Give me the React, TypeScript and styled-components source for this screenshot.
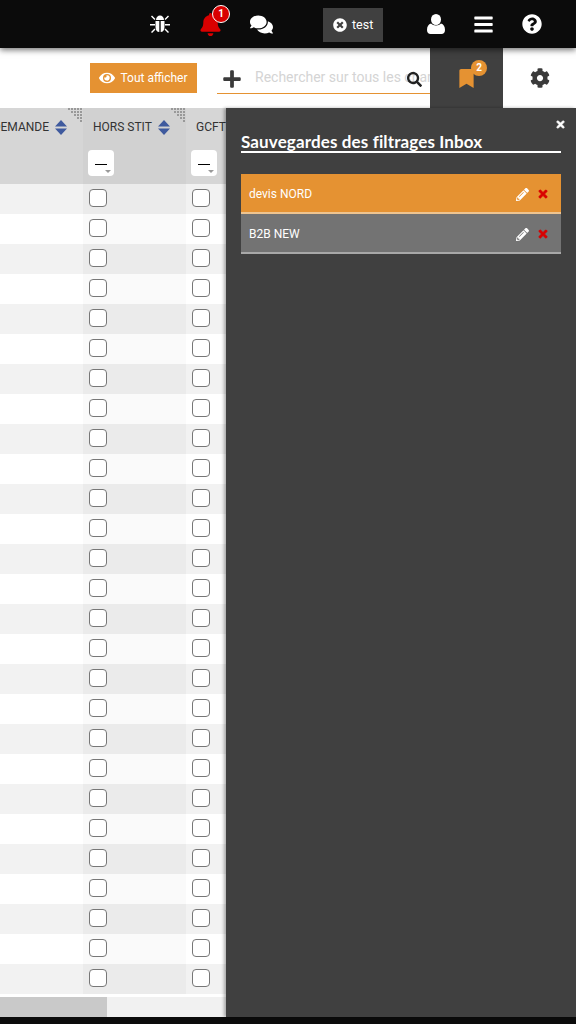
import React from 'react'
import styled, { createGlobalStyle } from 'styled-components'
import {
  FaBars, FaBell, FaBookmark, FaCog, FaComments, FaEye, FaPencilAlt, FaPlus,
  FaQuestionCircle, FaSearch, FaTimes, FaTimesCircle,
} from 'react-icons/fa'

const GlobalStyle = createGlobalStyle`
  html, body { margin: 0; padding: 0; background: #fff; overflow: hidden; }
  * { box-sizing: border-box; }
  body { font-family: Roboto, "Liberation Sans", sans-serif; }
`

const Page = styled.div`
  display: flex;
  flex-direction: column;
  width: 576px;
  height: 1024px;
  background: #0b0b0b;
`

const TopBar = styled.header`
  position: relative;
  z-index: 3;
  flex: 0 0 48px;
  display: flex;
  align-items: center;
  padding-left: 134px;
  background: #0b0b0b;
  box-shadow: 0 2px 6px rgba(0, 0, 0, 0.55);
`

const NavIcon = styled.div<{ $w?: number; $ml?: number }>`
  position: relative;
  flex: 0 0 ${p => p.$w ?? 51}px;
  margin-left: ${p => p.$ml ?? 0}px;
  display: flex;
  justify-content: center;
  align-items: center;
  height: 48px;
  color: #fff;
  font-size: 20px;
`

const NotifBadge = styled.span`
  position: absolute;
  top: 5px;
  left: 27px;
  width: 18px;
  height: 18px;
  border-radius: 50%;
  border: 1px solid #fff;
  background: #d90000;
  color: #fff;
  font-size: 10px;
  font-weight: 700;
  line-height: 16px;
  text-align: center;
`

const UserChip = styled.div`
  flex: 0 0 60px;
  margin-left: 36px;
  height: 34px;
  margin-top: 1px;
  display: flex;
  align-items: center;
  gap: 5px;
  padding-left: 10px;
  background: #404040;
  color: #fff;
  font-size: 12.5px;
`

const ToolBar = styled.div`
  flex: 0 0 60px;
  display: flex;
  align-items: stretch;
  background: #fff;
`

const ShowAll = styled.button`
  align-self: flex-start;
  width: 107px;
  height: 30px;
  margin: 15px 20px 0 90px;
  padding: 0;
  display: flex;
  align-items: center;
  justify-content: center;
  gap: 5px;
  border: 0;
  background: #e59232;
  color: #fff;
  font-family: Roboto, sans-serif;
  font-size: 12px;
  svg { font-size: 16px; }
`

const SearchBox = styled.div`
  position: relative;
  align-self: flex-start;
  flex: 0 0 213px;
  height: 46px;
  display: flex;
  align-items: center;
  gap: 13px;
  padding: 16px 0 0 5px;
  overflow: hidden;
  border-bottom: 1px solid #e59232;
  color: #3a3a3a;
  svg { flex: none; }
`

const Placeholder = styled.span`
  flex: none;
  margin-top: -3px;
  color: #d4d4d4;
  font-size: 14px;
  white-space: nowrap;
`

const SearchGlass = styled.span`
  position: absolute;
  right: 8px;
  top: 24px;
  display: flex;
  color: #222;
  font-size: 15px;
`

const Tab = styled.div<{ $active?: boolean }>`
  position: relative;
  flex: 0 0 73px;
  display: flex;
  align-items: center;
  justify-content: center;
  background: ${p => (p.$active ? '#404040' : '#fff')};
  color: ${p => (p.$active ? '#e59232' : '#3a3a3a')};
  font-size: 20px;
`

const TabBadge = styled.span`
  position: absolute;
  top: 12px;
  left: 41px;
  width: 16px;
  height: 16px;
  border-radius: 50%;
  background: #e59232;
  color: #fff;
  font-size: 10px;
  font-weight: 700;
  line-height: 16px;
  text-align: center;
`

const Main = styled.div`
  flex: 0 0 909px;
  display: flex;
  min-height: 0;
`

const TableArea = styled.div`
  flex: 0 0 226px;
  display: flex;
  flex-direction: column;
  background: #fff;
`

const Row = styled.div<{ $shade?: boolean }>`
  display: grid;
  grid-template-columns: 83px 103px 40px;
  height: 30px;
  background: ${p => (p.$shade ? '#f2f2f2' : '#fff')};
`

const Cell = styled.div<{ $mid?: boolean; $shade?: boolean }>`
  display: flex;
  align-items: center;
  padding: 0 0 2px 6px;
  background: ${p => (p.$mid ? (p.$shade ? '#ebebeb' : '#fafafa') : 'transparent')};
`

const Check = styled.span`
  width: 18px;
  height: 18px;
  border: 1.5px solid #777;
  border-radius: 4px;
  background: #fff;
`

const HeadRow = styled.div`
  display: grid;
  grid-template-columns: 83px 103px 40px;
  height: 76px;
  background: #d6d6d6;
`

const HeadCell = styled.div<{ $mid?: boolean; $right?: boolean }>`
  position: relative;
  overflow: hidden;
  display: flex;
  flex-direction: column;
  align-items: ${p => (p.$right ? 'flex-end' : 'flex-start')};
  padding: 10px ${p => (p.$right ? 16 : 0)}px 0 ${p => (p.$right ? 0 : 10)}px;
  background: ${p => (p.$mid ? '#d1d1d1' : 'transparent')};
`

const HeadTitle = styled.div`
  display: flex;
  align-items: center;
  gap: 6px;
  height: 18px;
  color: #333;
  font-size: 12px;
  white-space: nowrap;
`

const SortArrows = styled.svg`
  display: block;
  flex: none;
`

const FilterSelect = styled.div`
  position: relative;
  width: 26px;
  height: 26px;
  margin: 14px 0 0 -5px;
  border-radius: 4px;
  background: #fff;
  &::before {
    content: '';
    position: absolute;
    left: 7px;
    top: 14px;
    width: 12px;
    height: 1px;
    background: #000;
  }
  &::after {
    content: '';
    position: absolute;
    right: 3px;
    top: 20px;
    border: 3px solid transparent;
    border-top: 3px solid #999;
  }
`

const Corner = styled.svg`
  position: absolute;
  top: 0;
  right: 1px;
`

const ScrollTrack = styled.div`
  height: 20px;
  margin-top: 3px;
  background: #f1f1f1;
`

const ScrollThumb = styled.div`
  width: 107px;
  height: 100%;
  background: #c9c9c9;
`

const SidePanel = styled.aside`
  position: relative;
  flex: 1;
  padding: 24px 15px 0;
  background: #404040;
  box-shadow: -2px 0 3px rgba(0, 0, 0, 0.3);
`

const CloseBtn = styled.span`
  position: absolute;
  top: 11px;
  right: 10px;
  display: flex;
  color: #fff;
  font-size: 11px;
  svg { stroke: #fff; stroke-width: 30px; }
`

const PanelTitle = styled.h2`
  margin: 0 0 21px;
  height: 21px;
  border-bottom: 2px solid #fff;
  color: #fff;
  font-family: Lato, "Open Sans", sans-serif;
  font-size: 17px;
  font-weight: 700;
  letter-spacing: 0.13px;
  line-height: 20px;
  white-space: nowrap;
`

const SaveItem = styled.div<{ $active?: boolean }>`
  display: flex;
  align-items: center;
  height: 40px;
  padding: 2px 12px 0 8px;
  border-bottom: 2px solid ${p => (p.$active ? '#eec490' : '#a8a8a8')};
  background: ${p => (p.$active ? '#e59232' : '#737373')};
  color: #fff;
  font-size: 12px;
`

const SaveLabel = styled.span`
  flex: 1;
`

const SaveActions = styled.span`
  display: flex;
  align-items: center;
  gap: 8px;
  font-size: 13px;
`

const DeleteIcon = styled.span`
  display: flex;
  color: #d90000;
  font-size: 12px;
  svg { stroke: #d90000; stroke-width: 30px; }
`

const Footer = styled.div`
  flex: 1;
  background: #0b0b0b;
`

// dotted resize handle in the top right corner of a column header
const CornerDots = () => (
  <Corner width="14" height="15" viewBox="0 0 14 15">
    {[0, 1, 2, 3, 4].flatMap(r =>
      [0, 1, 2, 3, 4].map(c =>
        c >= r ? <rect key={`${r}-${c}`} x={c * 3} y={r * 3} width="2" height="2" fill="#999" /> : null
      )
    )}
  </Corner>
)

const Sort = () => (
  <SortArrows width="12" height="15" viewBox="0 0 12 15">
    <path d="M6 0 12 6.5H0Z M0 8.5H12L6 15Z" fill="#3f5a9e" />
  </SortArrows>
)

const BugIcon = () => (
  <svg width="20" height="20" viewBox="0 0 20 20" fill="#fff">
    <path d="M6 6C6 3 8 1.5 10 1.5S14 3 14 6Z" />
    <path d="M5.5 7H9.3V18C7 18 5.5 16 5.5 13Z M10.7 7H14.5V13C14.5 16 13 18 10.7 18Z" />
    <path d="M1 2.5 2 1.5 5.5 5 4.5 6Z M19 2.5 18 1.5 14.5 5 15.5 6Z M0 10H5V11.5H0Z M15 10H20V11.5H15Z M1 18 2 19 5.5 15.5 4.5 14.5Z M19 18 18 19 14.5 15.5 15.5 14.5Z" />
  </svg>
)

const UserIcon = () => (
  <svg width="18" height="20" viewBox="0 0 18 20" fill="#fff">
    <ellipse cx="9" cy="5.5" rx="5" ry="5.5" />
    <path d="M4 9.5C6 12 12 12 14 9.5 16.5 10 18 12.5 18 16 18 18.5 16.5 20 14.5 20H3.5C1.5 20 0 18.5 0 16 0 12.5 1.5 10 4 9.5Z" />
  </svg>
)

const rows = Array.from({ length: 27 }, (_, i) => i)

export default function App() {
  return (
    <Page>
      <GlobalStyle />
      <TopBar>
        <NavIcon><BugIcon /></NavIcon>
        <NavIcon>
          <FaBell color="#d90000" size={23} />
          <NotifBadge>1</NotifBadge>
        </NavIcon>
        <NavIcon><FaComments size={23} /></NavIcon>
        <UserChip><FaTimesCircle size={14} /> test</UserChip>
        <NavIcon $ml={27}><UserIcon /></NavIcon>
        <NavIcon $w={44}><FaBars size={21} /></NavIcon>
        <NavIcon $w={54}><FaQuestionCircle /></NavIcon>
      </TopBar>

      <ToolBar>
        <ShowAll><FaEye /> Tout afficher</ShowAll>
        <SearchBox>
          <FaPlus size={20} />
          <Placeholder>Rechercher sur tous les champs</Placeholder>
          <SearchGlass><FaSearch /></SearchGlass>
        </SearchBox>
        <Tab $active>
          <FaBookmark size={19} />
          <TabBadge>2</TabBadge>
        </Tab>
        <Tab><FaCog /></Tab>
      </ToolBar>

      <Main>
        <TableArea>
          <HeadRow>
            <HeadCell $right>
              <HeadTitle>DEMANDE <Sort /></HeadTitle>
              <CornerDots />
            </HeadCell>
            <HeadCell $mid>
              <HeadTitle>HORS STIT <Sort /></HeadTitle>
              <FilterSelect />
              <CornerDots />
            </HeadCell>
            <HeadCell>
              <HeadTitle>GCFT</HeadTitle>
              <FilterSelect />
            </HeadCell>
          </HeadRow>
          {rows.map(i => (
            <Row key={i} $shade={i % 2 === 0}>
              <Cell />
              <Cell $mid $shade={i % 2 === 0}><Check /></Cell>
              <Cell><Check /></Cell>
            </Row>
          ))}
          <ScrollTrack><ScrollThumb /></ScrollTrack>
        </TableArea>

        <SidePanel>
          <CloseBtn><FaTimes /></CloseBtn>
          <PanelTitle>Sauvegardes des filtrages Inbox</PanelTitle>
          <SaveItem $active>
            <SaveLabel>devis NORD</SaveLabel>
            <SaveActions><FaPencilAlt /><DeleteIcon><FaTimes /></DeleteIcon></SaveActions>
          </SaveItem>
          <SaveItem>
            <SaveLabel>B2B NEW</SaveLabel>
            <SaveActions><FaPencilAlt /><DeleteIcon><FaTimes /></DeleteIcon></SaveActions>
          </SaveItem>
        </SidePanel>
      </Main>
      <Footer />
    </Page>
  )
}
